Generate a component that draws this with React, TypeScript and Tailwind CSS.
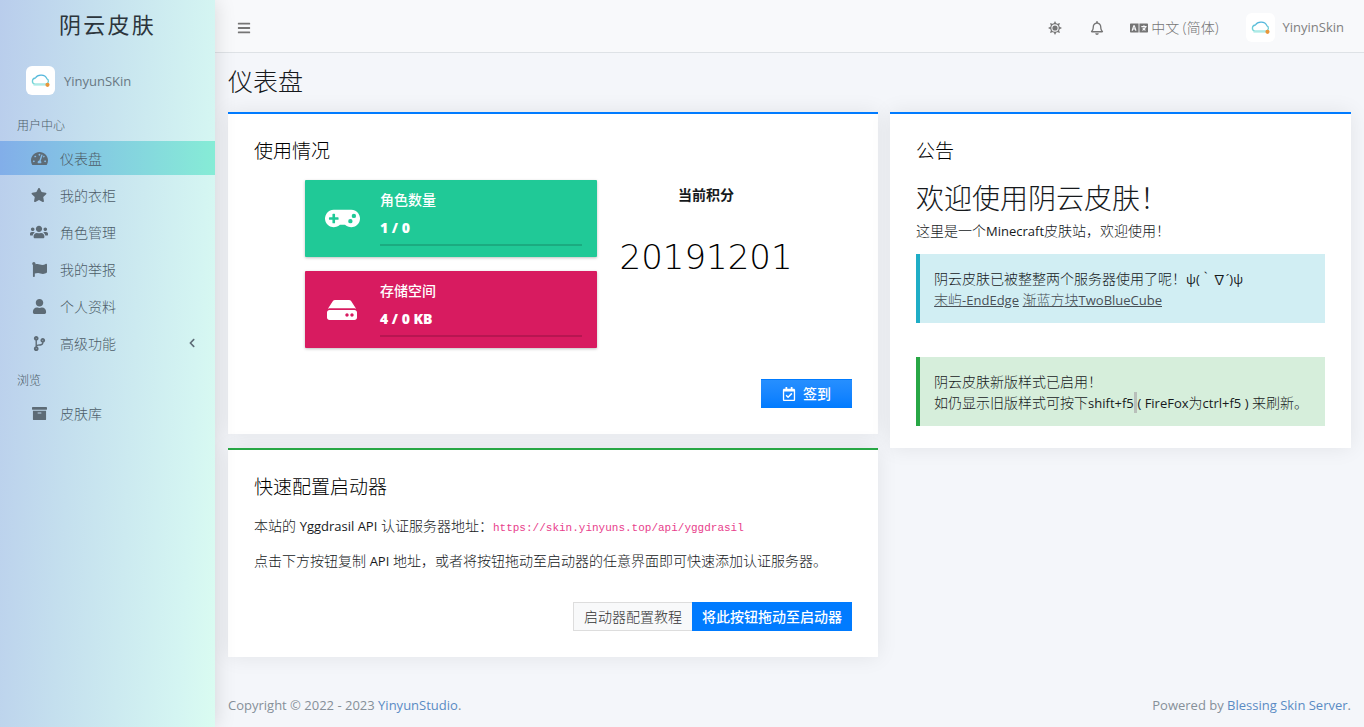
import React from 'react';
import {
  FaArchive,
  FaBars,
  FaChevronLeft,
  FaCodeBranch,
  FaFlag,
  FaGamepad,
  FaHdd,
  FaLanguage,
  FaRegBell,
  FaRegCalendarCheck,
  FaStar,
  FaTachometerAlt,
  FaUser,
  FaUsers,
} from 'react-icons/fa';

function CloudAvatar() {
  return (
    <span className="flex size-[29px] shrink-0 items-center justify-center rounded-md bg-white">
      <svg viewBox="0 0 29 29" className="size-full" aria-hidden="true">
        <defs>
          <linearGradient id="cloudStroke" x1="0" y1="0" x2="0" y2="1">
            <stop offset="0" stopColor="#4fb3dc" />
            <stop offset="1" stopColor="#7fdcd6" />
          </linearGradient>
        </defs>
        <path
          d="M8.6 18.2 H20 A3 3 0 0 0 20.8 12.6 A6.2 5.2 0 0 0 9.4 12 A3.3 3.2 0 0 0 8.6 18.2 Z"
          fill="#fff"
          stroke="url(#cloudStroke)"
          strokeWidth="1.3"
        />
        <path d="M7.5 19 H20" stroke="#b4ece8" strokeWidth="1.4" />
        <circle cx="21.5" cy="18.8" r="2.1" fill="#e8963a" />
      </svg>
    </span>
  );
}

function SunIcon() {
  const rays = [0, 45, 90, 135, 180, 225, 270, 315];
  return (
    <svg viewBox="0 0 14 14" className="size-[14px]" aria-hidden="true">
      <circle cx="7" cy="7" r="4.2" fill="none" stroke="currentColor" strokeWidth="1.1" />
      <circle cx="7" cy="7" r="2.6" fill="currentColor" />
      {rays.map((a) => (
        <path key={a} d="M5.5 2.9 L7 0 L8.5 2.9 Z" fill="currentColor" transform={`rotate(${a} 7 7)`} />
      ))}
    </svg>
  );
}

function Latin({ children }: { children: React.ReactNode }) {
  return <span className="text-[13px] leading-none font-normal">{children}</span>;
}

type Item = { label: string; icon: React.ReactNode; active?: boolean; expandable?: boolean };

const userItems: Item[] = [
  { label: '仪表盘', icon: <FaTachometerAlt className="size-[17px]" />, active: true },
  { label: '我的衣柜', icon: <FaStar className="size-4" /> },
  { label: '角色管理', icon: <FaUsers className="size-[18px]" /> },
  { label: '我的举报', icon: <FaFlag className="size-[15px]" /> },
  { label: '个人资料', icon: <FaUser className="size-[15px]" /> },
  { label: '高级功能', icon: <FaCodeBranch className="size-[15px]" />, expandable: true },
];

const browseItems: Item[] = [{ label: '皮肤库', icon: <FaArchive className="size-[15px]" /> }];

function NavGroup({ title, items }: { title: string; items: Item[] }) {
  return (
    <section>
      <h2 className="flex h-[33px] items-center pt-[2px] pl-[17px] text-xs">{title}</h2>
      <ul className="flex flex-col gap-[3px] pb-[3px]">
        {items.map((it) => (
          <li key={it.label}>
            <a
              href="#"
              className={
                it.active
                  ? 'flex h-[34px] items-center bg-linear-to-r from-[#82aee9] to-[#86ecd6] pl-[28px] pr-[18px]'
                  : 'flex h-[34px] items-center pl-[28px] pr-[18px]'
              }
            >
              <span className="flex w-[22px] justify-center text-[#5d6b76]">{it.icon}</span>
              <span className="ml-[10px] flex-1 pt-[2px]">{it.label}</span>
              {it.expandable && <FaChevronLeft className="size-[10px] text-[#5d6b76]" />}
            </a>
          </li>
        ))}
      </ul>
    </section>
  );
}

function Sidebar() {
  return (
    <aside className="z-10 w-[215px] shrink-0 bg-[linear-gradient(93deg,#b9cdec_0%,#c4dfee_36%,#d4f5f2_85%,#dafcf1_100%)] text-[#4d5d68] shadow-[0_0_20px_rgba(0,0,0,0.14)]">
      <a href="#" className="flex h-[53px] items-center justify-center pb-[3px] text-[22px] font-normal tracking-widest text-[#2c353c]">
        阴云皮肤
      </a>
      <div className="flex h-[55px] items-center gap-[9px] pl-[26px]">
        <CloudAvatar />
        <a href="#" className="pt-[2px] text-[13px] font-normal text-[#687883]">YinyunSKin</a>
      </div>
      <nav>
        <NavGroup title="用户中心" items={userItems} />
        <NavGroup title="浏览" items={browseItems} />
      </nav>
    </aside>
  );
}

function Topbar() {
  return (
    <header className="flex h-[53px] items-center border-b border-[#dee2e6] bg-[#f8f9fb] px-5 pt-[3px] text-[#757575]">
      <button type="button" aria-label="Menu" className="p-[2px]">
        <FaBars className="size-[14px]" />
      </button>
      <div className="ml-auto flex items-center gap-7">
        <div className="flex items-center gap-[26px]">
          <div className="flex items-center gap-7">
            <button type="button" aria-label="Theme"><SunIcon /></button>
            <button type="button" aria-label="Notifications"><FaRegBell className="size-[14px]" /></button>
          </div>
          <a href="#" className="flex items-center gap-[3px] text-sm">
            <FaLanguage className="size-[18px]" />
            中文 (简体)
          </a>
        </div>
        <a href="#" className="flex items-center gap-[7px] text-[13px] font-normal text-[#808080]">
          <CloudAvatar />
          YinyinSkin
        </a>
      </div>
    </header>
  );
}

function Card({ title, accent, children }: { title: string; accent: string; children: React.ReactNode }) {
  return (
    <section className={`${accent} border-t-2 bg-white px-[26px] pt-6 shadow-[0_0_20px_rgba(0,0,0,0.08)]`}>
      <h2 className="text-[19px] leading-[26px] text-black">{title}</h2>
      {children}
    </section>
  );
}

function InfoBox({ tone, icon, label, value }: { tone: string; icon: React.ReactNode; label: string; value: string }) {
  return (
    <div className={`${tone} flex h-[77px] items-stretch rounded-[1px] pl-[7px] pr-[15px] text-white shadow-[0_1px_3px_rgba(0,0,0,0.25)]`}>
      <span className="flex w-[60px] items-center justify-center">{icon}</span>
      <div className="ml-2 flex-1 pt-[6px]">
        <div className="text-sm leading-[28px] font-medium">{label}</div>
        <div className="text-sm leading-[28px] font-extrabold">{value}</div>
        <div className="mt-[2px] h-[2px] bg-black/15" />
      </div>
    </div>
  );
}

export default function App() {
  return (
    <div className="flex min-h-screen bg-[#f4f6fa] font-['Open_Sans','Noto_Sans_CJK_SC',sans-serif] text-sm font-light text-[#16191c]">
      <Sidebar />
      <div className="flex min-w-0 flex-1 flex-col">
        <Topbar />
        <main className="px-[13px] pt-[11px]">
          <h1 className="text-[25px] leading-[34px]">仪表盘</h1>
          <div className="mt-[14px] grid grid-cols-12 items-start gap-3">
            <div className="col-span-7 flex flex-col gap-[14px]">
              <Card title="使用情况" accent="border-[#007bff]">
                <div className="mt-4 grid grid-cols-12 gap-[14px]">
                  <div className="col-span-6 col-start-2 flex flex-col gap-[14px]">
                    <InfoBox tone="bg-[#20c997]" icon={<FaGamepad className="size-[35px]" />} label="角色数量" value="1 / 0" />
                    <InfoBox tone="bg-[#d81b60]" icon={<FaHdd className="size-[30px]" />} label="存储空间" value="4 / 0 KB" />
                  </div>
                  <div className="col-span-4 text-center">
                    <p className="pt-[4px] leading-[21px] font-bold">当前积分</p>
                    <p className="mt-[31px] font-['DejaVu_Sans',sans-serif] text-[34px] leading-[42px] font-extralight text-black">20191201</p>
                  </div>
                </div>
                <div className="mt-[31px] flex justify-end pb-[26px]">
                  <button type="button" className="flex h-[29px] items-center gap-[7px] border-t border-[#007bff] bg-linear-to-b from-[#268fff] to-[#007bff] px-[21px] font-medium text-white">
                    <FaRegCalendarCheck className="size-[14px]" />
                    签到
                  </button>
                </div>
              </Card>
              <Card title="快速配置启动器" accent="border-[#28a745]">
                <p className="mt-[15px] leading-[21px]">
                  本站的 <Latin>Yggdrasil API</Latin> 认证服务器地址：
                  <code className="font-['Liberation_Mono',monospace] text-[11px] leading-none font-normal text-[#e83e8c]">https://skin.yinyuns.top/api/yggdrasil</code>
                </p>
                <p className="mt-[14px] leading-[21px]">点击下方按钮复制 <Latin>API</Latin> 地址，或者将按钮拖动至启动器的任意界面即可快速添加认证服务器。</p>
                <div className="mt-[31px] flex justify-end pb-[26px]">
                  <a href="#" className="flex h-[29px] items-center border border-r-0 border-[#dddddd] bg-[#f8f9fa] px-[10px] text-[#333333]">启动器配置教程</a>
                  <a href="#" className="flex h-[29px] items-center bg-[#007bff] px-[10px] font-medium text-white">将此按钮拖动至启动器</a>
                </div>
              </Card>
            </div>
            <div className="col-span-5">
              <Card title="公告" accent="border-[#007bff]">
                <h1 className="mt-4 text-[28px] leading-9">欢迎使用阴云皮肤！</h1>
                <p className="mt-[4px] leading-[21px]">这里是一个<Latin>Minecraft</Latin>皮肤站，欢迎使用！</p>
                <div className="mt-[13px] border-l-4 border-[#1fadc6] bg-[#d1eef3] px-[14px] pt-[14px] pb-[13px]">
                  <p className="leading-[21px]">阴云皮肤已被整整两个服务器使用了呢！<Latin>ψ(｀∇´)ψ</Latin></p>
                  <p className="leading-[21px] text-[#495057]">
                    <a href="#" className="underline">末屿<Latin>-EndEdge</Latin></a> <a href="#" className="underline">渐蓝方块<Latin>TwoBlueCube</Latin></a>
                  </p>
                </div>
                <div className="mt-[34px] border-l-4 border-[#28a745] bg-[#d6eedb] px-[14px] pt-[14px] pb-[13px]">
                  <p className="leading-[21px]">阴云皮肤新版样式已启用！</p>
                  <p className="leading-[21px]">
                    如仍显示旧版样式可按下<Latin>shift+f5</Latin><span className="bg-[#b9bfba] py-px"> </span><Latin>( FireFox</Latin>为<Latin>ctrl+f5 )</Latin> 来刷新。
                  </p>
                </div>
                <div className="h-[22px]" />
              </Card>
            </div>
          </div>
        </main>
        <footer className="mt-auto flex justify-between px-[13px] pb-3 text-[13px] leading-5 font-normal text-[#869099]">
          <p>Copyright © 2022 - 2023 <a href="#" className="text-[#5a8bc4]">YinyunStudio</a>.</p>
          <p>Powered by <a href="#" className="text-[#5a8bc4]">Blessing Skin Server</a>.</p>
        </footer>
      </div>
    </div>
  );
}
